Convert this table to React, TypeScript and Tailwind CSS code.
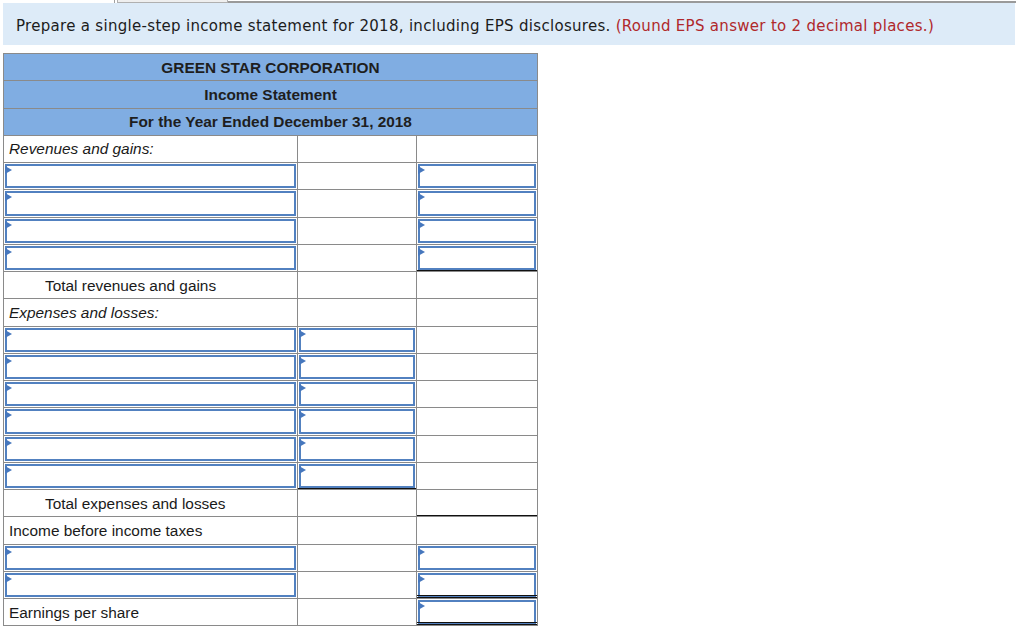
import React from "react";

type Cell = { kind: "text" | "input" | "empty"; label?: string; italic?: boolean; indent?: boolean; under?: "single" | "double" };

const T = (label: string, italic = false, indent = false): Cell => ({ kind: "text", label, italic, indent });
const I = (under?: "single" | "double"): Cell => ({ kind: "input", under });
const E = (under?: "single" | "double"): Cell => ({ kind: "empty", under });

const rows: Cell[][] = [
  [T("Revenues and gains:", true), E(), E()],
  [I(), E(), I()],
  [I(), E(), I()],
  [I(), E(), I()],
  [I(), E(), I("single")],
  [T("Total revenues and gains", false, true), E(), E()],
  [T("Expenses and losses:", true), E(), E()],
  [I(), I(), E()],
  [I(), I(), E()],
  [I(), I(), E()],
  [I(), I(), E()],
  [I(), I(), E()],
  [I(), I("single"), E()],
  [T("Total expenses and losses", false, true), E(), E("single")],
  [T("Income before income taxes"), E(), E()],
  [I(), E(), I()],
  [I(), E(), I("double")],
  [T("Earnings per share"), E(), I("double")],
];

const Underline = ({ under }: { under?: "single" | "double" }) => {
  if (under === "single") return <span className="absolute left-0 right-0 bottom-0 h-[1px] bg-[#111]" />;
  if (under === "double") return <span className="absolute left-0 right-0 bottom-0 h-[3px] border-y border-[#111]" />;
  return null;
};

const CellView = ({ cell }: { cell: Cell }) => {
  if (cell.kind === "input") {
    return (
      <div className="relative bg-white p-px">
        <div className="relative h-full border-2 border-[#5281c0]">
          <span className="absolute left-[-2px] top-[0px] w-0 h-0 border-y-[4px] border-y-transparent border-l-[7px] border-l-[#4677bd]" />
        </div>
        <Underline under={cell.under} />
      </div>
    );
  }
  if (cell.kind === "text") {
    return (
      <div
        className={`relative bg-white flex items-center text-[15.4px] text-[#1a1a1a] ${cell.italic ? "italic" : ""} ${cell.indent ? "pl-[41px]" : "pl-[5px]"}`}
      >
        {cell.label}
      </div>
    );
  }
  return (
    <div className="relative bg-white">
      <Underline under={cell.under} />
    </div>
  );
};

export default function App() {
  return (
    <div className="w-[1024px] h-[636px] bg-white overflow-hidden font-['Liberation_Sans',Arial,sans-serif]">
      <div className="flex h-[3px]">
        <div className="w-[115px] border-r border-[#a0a0a0]" />
        <div className="w-[111px] ml-[2px] bg-[#efefef] border-x border-b border-[#b0b0b0]" />
        <div className="w-[788px] border-b-2 border-[#9a9a9a]" />
      </div>
      <div className="ml-[3px] w-[1012px] h-[42px] bg-[#ddebf8] flex items-center pl-[13px] pt-[4px] text-[15px] text-[#1c1c1c] font-['DejaVu_Sans',Verdana,sans-serif] tracking-[0.3px]">
        <span>Prepare a single-step income statement for 2018, including EPS disclosures.</span>
        <span className="ml-[5px] text-[#b0282b]">(Round EPS answer to 2 decimal places.)</span>
      </div>
      <div className="ml-[3px] mt-[8px] w-[535px] grid grid-cols-[293px_118px_120px] auto-rows-[26.25px] gap-px p-px bg-[#8a8a8a]">
        <div className="col-span-3 bg-[#80ade2] flex items-center justify-center text-[15.4px] font-bold text-[#1e1e1e]">GREEN STAR CORPORATION</div>
        <div className="col-span-3 bg-[#80ade2] flex items-center justify-center text-[15.4px] font-bold text-[#1e1e1e]">Income Statement</div>
        <div className="col-span-3 bg-[#80ade2] flex items-center justify-center text-[15.4px] font-bold text-[#1e1e1e]">For the Year Ended December 31, 2018</div>
        {rows.map((r, i) => (
          <React.Fragment key={i}>
            {r.map((c, j) => (
              <CellView key={j} cell={c} />
            ))}
          </React.Fragment>
        ))}
      </div>
    </div>
  );
}
